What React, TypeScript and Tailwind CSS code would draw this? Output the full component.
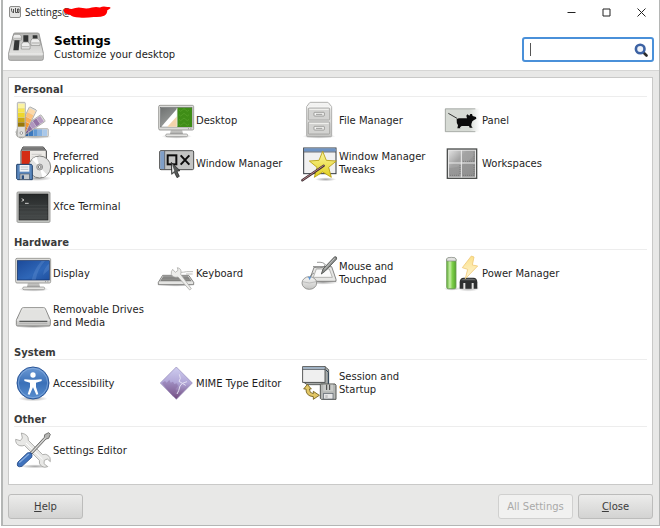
import type { ReactNode } from "react";
import clsx from "clsx";

type SettingsItem = {
  label: string;
  icon: ReactNode;
};

type SettingsGroup = {
  title: string;
  items: SettingsItem[];
};

// Gradients shared by all icons
function IconDefs() {
  return (
    <svg aria-hidden="true" className="absolute h-0 w-0">
      <defs>
        <linearGradient id="metal" x1="0" y1="0" x2="0" y2="1">
          <stop offset="0" stopColor="#f6f6f5" />
          <stop offset="1" stopColor="#c4c4c2" />
        </linearGradient>
        <linearGradient id="metalDark" x1="0" y1="0" x2="0" y2="1">
          <stop offset="0" stopColor="#d8d8d6" />
          <stop offset="1" stopColor="#a6a6a4" />
        </linearGradient>
        <linearGradient id="mixer" x1="0" y1="0" x2="0" y2="1">
          <stop offset="0" stopColor="#b4b4b2" />
          <stop offset="0.7" stopColor="#dededc" />
          <stop offset="1" stopColor="#b9b9b7" />
        </linearGradient>
        <linearGradient id="screenBlue" x1="0" y1="0" x2="1" y2="1">
          <stop offset="0" stopColor="#1c4a99" />
          <stop offset="0.6" stopColor="#2f67b8" />
          <stop offset="1" stopColor="#1f509f" />
        </linearGradient>
        <linearGradient id="wallGray" x1="0" y1="0" x2="1" y2="1">
          <stop offset="0" stopColor="#6f7271" />
          <stop offset="1" stopColor="#b9bbb9" />
        </linearGradient>
        <linearGradient id="panelFade" x1="0" y1="0" x2="1" y2="0">
          <stop offset="0.7" stopColor="#d6dad4" />
          <stop offset="1" stopColor="#ffffff" />
        </linearGradient>
        <linearGradient id="dark" x1="0" y1="0" x2="0" y2="1">
          <stop offset="0" stopColor="#262929" />
          <stop offset="1" stopColor="#474b4b" />
        </linearGradient>
        <linearGradient id="work" x1="0" y1="0" x2="1" y2="1">
          <stop offset="0" stopColor="#e0e0e0" />
          <stop offset="0.35" stopColor="#a4a4a4" />
          <stop offset="1" stopColor="#949494" />
        </linearGradient>
        <linearGradient id="battery" x1="0" y1="0" x2="1" y2="0">
          <stop offset="0" stopColor="#5fae35" />
          <stop offset="0.35" stopColor="#c8f0a6" />
          <stop offset="0.6" stopColor="#7fd04a" />
          <stop offset="1" stopColor="#55a52c" />
        </linearGradient>
        <linearGradient id="bolt" x1="0" y1="0" x2="0" y2="1">
          <stop offset="0" stopColor="#fbe08a" />
          <stop offset="1" stopColor="#fff6d6" />
        </linearGradient>
        <linearGradient id="access" x1="0" y1="0" x2="0" y2="1">
          <stop offset="0" stopColor="#6d9ad4" />
          <stop offset="0.5" stopColor="#3a70b8" />
          <stop offset="1" stopColor="#5a8fcf" />
        </linearGradient>
        <linearGradient id="mime" x1="0" y1="0" x2="0" y2="1">
          <stop offset="0" stopColor="#cfcdf0" />
          <stop offset="0.5" stopColor="#b0a5d6" />
          <stop offset="1" stopColor="#6d4478" />
        </linearGradient>
        <linearGradient id="star" x1="0" y1="0" x2="0" y2="1">
          <stop offset="0" stopColor="#fbf6a0" />
          <stop offset="1" stopColor="#e2cf1c" />
        </linearGradient>
        <radialGradient id="shade">
          <stop offset="0" stopColor="#000000" stopOpacity="0.35" />
          <stop offset="1" stopColor="#000000" stopOpacity="0" />
        </radialGradient>
      </defs>
    </svg>
  );
}

function Icon({ children }: { children: ReactNode }) {
  return (
    <svg viewBox="0 0 108 108" aria-hidden="true" className="h-9 w-9 shrink-0 overflow-visible">
      {children}
    </svg>
  );
}

const SWATCHES = [
  { angle: 90, length: 94, colors: ["#a9c8ea", "#86b1e0", "#5f97d3", "#3c78bd", "#2a5f9f", "#1f4d86"] },
  { angle: 56, length: 92, colors: ["#b79dc4", "#9474a6", "#b096bf", "#8b6a9e", "#6f4a85"] },
  { angle: 26, length: 94, colors: ["#fcd9a8", "#fbc27c", "#f9ae57", "#f6962f", "#e87d0e"] },
  { angle: 0, length: 104, colors: ["#fbf3a0", "#f7e54f", "#edd62c", "#c9a915", "#97770a"] },
];

function AppearanceIcon() {
  return (
    <Icon>
      <ellipse cx="60" cy="104" rx="50" ry="7" fill="url(#shade)" />
      {SWATCHES.map((strip) => (
        <g key={strip.angle} transform={`translate(19 92) rotate(${strip.angle})`}>
          <rect
            x="-12"
            y={13 - strip.length}
            width="24"
            height={strip.length}
            rx="3"
            fill="#dededc"
            stroke="#9a9a96"
            strokeWidth="2"
          />
          {strip.colors.map((color, i) => (
            <rect key={color} x="-10" y={17 - strip.length + i * 14} width="20" height="13" fill={color} />
          ))}
        </g>
      ))}
      <circle cx="19" cy="93" r="4" fill="#fff" stroke="#777" strokeWidth="2" />
    </Icon>
  );
}

function MonitorBody() {
  return (
    <>
      <ellipse cx="56" cy="103" rx="46" ry="7" fill="url(#shade)" />
      <path d="M39 82h33l3 14H36z" fill="url(#metalDark)" />
      <rect x="23" y="96" width="66" height="8" rx="4" fill="#e4e4e2" stroke="#8a8a88" strokeWidth="2" />
      <rect x="2" y="10" width="105" height="74" rx="4" fill="#dcdcda" stroke="#8f8f8c" strokeWidth="2.5" />
      <path d="M90 80h3M97 80h3" stroke="#777" strokeWidth="2" />
    </>
  );
}

function DesktopIcon() {
  return (
    <Icon>
      <MonitorBody />
      <rect x="8" y="17" width="94" height="58" fill="url(#wallGray)" stroke="#55585a" strokeWidth="1.5" />
      <rect x="58" y="17" width="44" height="58" fill="#3f8d17" />
      <path
        d="M63 24q5 8 10 0t10 0t10 0M63 38q5 8 10 0t10 0t10 0M63 52q5 8 10 0t10 0t10 0M63 66q5 8 10 0t10 0t10 0"
        fill="none"
        stroke="#55a02a"
        strokeWidth="2.5"
      />
      <path d="M10 74L57 20v54z" fill="#fff" />
      <path d="M28 74L57 43v31z" fill="#f2d3ab" />
      <path d="M57 18v56" stroke="#e9efe4" strokeWidth="2" />
    </Icon>
  );
}

function CabinetIcon() {
  return (
    <Icon>
      <ellipse cx="54" cy="103" rx="50" ry="7" fill="url(#shade)" />
      <path
        d="M17 14l8-11q1-2 4-2h50q3 0 4 2l9 11v87q0 3-3 3H20q-3 0-3-3z"
        fill="url(#metal)"
        stroke="#a2a2a0"
        strokeWidth="2.5"
      />
      <path d="M18 15h73" stroke="#fff" strokeWidth="2" />
      {[18, 60].map((y) => (
        <g key={y}>
          <rect x="22" y={y} width="64" height="36" rx="3" fill="#d3d3d1" stroke="#959593" strokeWidth="2" />
          <path d={`M25 ${y + 4}h58`} stroke="#f4f4f2" strokeWidth="3" />
          <rect x="39" y={y + 13} width="31" height="11" rx="2" fill="#f3f3f2" stroke="#7c7c79" strokeWidth="2" />
          <path d={`M45 ${y + 19}h19`} stroke="#858583" strokeWidth="2.5" />
        </g>
      ))}
    </Icon>
  );
}

function PanelIcon() {
  return (
    <Icon>
      <rect x="3" y="20" width="104" height="69" fill="url(#panelFade)" />
      <path d="M94 20.500H4V89h90" fill="none" stroke="#9b9f9a" strokeWidth="2.500" />
      <path d="M13 34l26 15" stroke="#111" strokeWidth="2.5" />
      <path
        d="M38 52q3-4 11-3h20l-2-8 3-4 6 4 3-5h5l2 6 10 3 1 5-8 5-4 3-3 8v6l4 5h-9l-2-5H53l-5 4 1 3h-9l2-9q-5-6-4-18z"
        fill="#0b0b0b"
      />
    </Icon>
  );
}

function Floppy({ x, y, gray }: { x: number; y: number; gray?: boolean }) {
  return (
    <g transform={`translate(${x} ${y})`}>
      <path
        d="M2 1h43l3 4v42H4l-3-3V2z"
        fill={gray ? "#b5b7b5" : "#5a87bd"}
        stroke={gray ? "#555753" : "#20406b"}
        strokeWidth="3"
      />
      <rect x="10" y="3" width="29" height="20" fill={gray ? "#c9cbc9" : "#f3f5f7"} />
      <path d={gray ? "M20 3v16M29 3v16" : "M13 9h23M13 16h23"} stroke={gray ? "#3c3c3c" : "#b9bfc6"} strokeWidth="3" />
      <rect x="11" y="30" width="28" height="16" fill={gray ? "#e7e7e7" : "#c3c8cd"} stroke="#58606a" strokeWidth="2" />
      <rect x="16" y="34" width="7" height="11" fill={gray ? "#c5c5c5" : "#2c4f7f"} />
    </g>
  );
}

function PreferredAppsIcon() {
  return (
    <Icon>
      <ellipse cx="66" cy="100" rx="44" ry="8" fill="url(#shade)" />
      <path d="M24 6h61l9 12v68H18V18z" fill="#eceae6" stroke="#3c3c3c" strokeWidth="3" />
      <path d="M24 7h61l8 10H19z" fill="#777" />
      <path d="M20 18h25v66H20z" fill="#d52c14" />
      <path d="M50 28h30M50 36h24" stroke="#cccbc8" strokeWidth="3" />
      <circle cx="74" cy="66" r="33" fill="#e2e2e1" stroke="#6c6c6a" strokeWidth="2.5" />
      <path d="M74 66L51 43a32 32 0 0 1 14-8zM74 66l22 23a32 32 0 0 1-14 8z" fill="#fff" />
      <circle cx="74" cy="66" r="9" fill="#c7c7c6" stroke="#777" strokeWidth="2" />
      <circle cx="74" cy="66" r="4" fill="#fff" stroke="#555" strokeWidth="2" />
      <Floppy x={4} y={57} />
    </Icon>
  );
}

function WindowManagerIcon() {
  return (
    <Icon>
      <rect x="5" y="17" width="102" height="57" rx="4" fill="#c3c4c3" stroke="#4c4e4e" strokeWidth="3" />
      <rect x="7" y="19" width="12" height="53" fill="#7f9fc8" />
      <path d="M20 18v55" stroke="#3c4654" strokeWidth="2" />
      <rect x="29" y="31" width="26" height="27" fill="none" stroke="#0d0d0d" strokeWidth="6" />
      <path d="M68 31l26 28M94 31L68 59" stroke="#0d0d0d" strokeWidth="6" />
      <path
        d="M40 52l1 36 8-6 8 16 7-4-7-15 9-2z"
        fill="#555857"
        stroke="#1c1c1c"
        strokeWidth="2"
        strokeLinejoin="round"
      />
      <path d="M42 58l1 25 6-5z" fill="#f1f1f1" />
    </Icon>
  );
}

function TweaksIcon() {
  return (
    <Icon>
      <ellipse cx="74" cy="103" rx="32" ry="6" fill="url(#shade)" />
      <rect x="8" y="9" width="97" height="77" fill="#f1f1f1" stroke="#33383f" strokeWidth="3" />
      <rect x="9" y="10" width="95" height="10" fill="#6f94c4" />
      <path d="M8 21h97" stroke="#33383f" strokeWidth="2" />
      <path
        d="M65 19l11 27 30 2-23 19 8 30-26-16-25 16 8-30-23-19 29-2z"
        fill="url(#star)"
        stroke="#b39a0c"
        strokeWidth="2.5"
        strokeLinejoin="round"
      />
      <path d="M4 106l64-44" stroke="#3f3034" strokeWidth="7" strokeLinecap="round" />
      <path d="M5 105l62-43" stroke="#b98088" strokeWidth="3" strokeLinecap="round" />
    </Icon>
  );
}

function WorkspacesIcon() {
  return (
    <Icon>
      <rect x="8" y="10" width="92" height="92" fill="#4d4f4e" />
      <rect x="12" y="14" width="84" height="84" fill="#e6e6e6" />
      <rect x="15" y="17" width="78" height="78" fill="url(#work)" />
      <path d="M15 95V70q42 0 78-42v67z" fill="#7b7b7b" opacity="0.25" />
      <path d="M52 15v82M13 54h82" stroke="#ececec" strokeWidth="3" />
      <path
        d="M57 49h34M57 91h34M18 91h30M48 60v30M90 60v30M90 20v28"
        fill="none"
        stroke="#6c6c6c"
        strokeWidth="2"
        strokeDasharray="3 3"
      />
    </Icon>
  );
}

function TerminalIcon() {
  return (
    <Icon>
      <rect x="6" y="12" width="99" height="91" rx="3" fill="#c9cbc8" stroke="#8b8d8a" strokeWidth="2.500" />
      <rect x="12" y="18" width="87" height="78" fill="url(#dark)" stroke="#1b1d1d" strokeWidth="2" />
      <path d="M13 52h85M13 62h85M13 72h85M13 82h85" stroke="#4c5050" strokeWidth="1.5" />
      <path d="M20 32l7 4-7 4M30 46h11" fill="none" stroke="#eeeeec" strokeWidth="2.5" />
    </Icon>
  );
}

function DisplayIcon() {
  return (
    <Icon>
      <MonitorBody />
      <rect x="7" y="17" width="96" height="58" fill="url(#screenBlue)" stroke="#102c60" strokeWidth="2" />
      <path d="M50 74q8-34 30-56h10q-22 24-28 56zM84 60q2-20 18-34v18z" fill="#7aa3dc" opacity="0.25" />
    </Icon>
  );
}

function KeyboardIcon() {
  return (
    <Icon>
      <ellipse cx="54" cy="90" rx="54" ry="5" fill="url(#shade)" />
      <path d="M14 61h78l15 21v7H1v-7z" fill="#e4e4e2" stroke="#6d6d6b" strokeWidth="2.5" />
      <path d="M16 64h74l11 15H6z" fill="#7e7e7c" />
      <path d="M14 69h78M10 74h86" stroke="#a4a4a1" strokeWidth="1.5" />
      <path d="M66 52q12 0 20-2h19M84 57h20" stroke="#bdbdba" strokeWidth="3" fill="none" />
      <path
        d="M44 43l8 9 8-6-2-8q12 2 11 14l-1 6 32 43-5 4-35-39q-14 3-20-7-2-10 4-16z"
        fill="#ededeb"
        stroke="#a0a09d"
        strokeWidth="2"
      />
    </Icon>
  );
}

function MouseIcon() {
  return (
    <Icon>
      <ellipse cx="66" cy="82" rx="46" ry="7" fill="url(#shade)" />
      <path d="M40 35h52l13 38v6H24l2-6z" fill="#e6e6e4" stroke="#6f6f6d" strokeWidth="2.5" />
      <path d="M46 42h39l9 25H37z" fill="#fafafa" stroke="#969693" strokeWidth="2" />
      <path
        d="M27 68q2-10 12-14M36 33q4 8 30 4 10-2 4-8M48 22q20-2 26 8"
        fill="none"
        stroke="#666866"
        strokeWidth="2"
      />
      <path
        d="M61 57l5-15 35-37 5 1 1 6-34 36z"
        fill="#8b8d8b"
        stroke="#4d4f4d"
        strokeWidth="2.500"
        strokeLinejoin="round"
      />
      <path d="M70 43l31-33" stroke="#d0d2d0" strokeWidth="2.5" />
      <ellipse cx="25" cy="84" rx="22" ry="19" fill="url(#metal)" stroke="#888885" strokeWidth="2.5" />
      <path d="M4 80q21 8 42 0" fill="none" stroke="#aaa" strokeWidth="2" />
      <path d="M20 64q5 4 11 0l-5 12z" fill="#5a93d3" />
    </Icon>
  );
}

function PowerIcon() {
  return (
    <Icon>
      <ellipse cx="24" cy="101" rx="24" ry="6" fill="url(#shade)" />
      <rect x="8" y="9" width="28" height="92" rx="5" fill="url(#battery)" stroke="#6e9a55" strokeWidth="2.5" />
      <path d="M8 18v-6q0-5 14-5t14 5v6z" fill="#e2e2e0" stroke="#888" strokeWidth="2" />
      <ellipse cx="73" cy="100" rx="34" ry="10" fill="url(#shade)" />
      <path d="M47 82q0-14 12-14h29q12 0 12 14v19H47z" fill="#2e3030" />
      <path d="M51 76q4-5 11-5h24q8 0 10 5z" fill="#696b6b" />
      <path d="M58 84h6v18h-6zM83 84h6v18h-6z" fill="#e2e2e0" />
      <path
        d="M82 3L55 38l16 5-7 28 37-38-16-3 5-24z"
        fill="url(#bolt)"
        stroke="#efc977"
        strokeWidth="2.500"
        strokeLinejoin="round"
      />
    </Icon>
  );
}

function DriveIcon() {
  return (
    <Icon>
      <ellipse cx="55" cy="85" rx="54" ry="6" fill="url(#shade)" />
      <path
        d="M20 32q1-3 5-3h61q4 0 5 3l15 34v14q0 4-4 4H8q-4 0-4-4V66z"
        fill="url(#metal)"
        stroke="#777775"
        strokeWidth="2.500"
      />
      <path d="M23 34h65l12 29H10z" fill="#e2e2e0" />
      <path d="M5 66h100" stroke="#fff" strokeWidth="2" />
      <path d="M13 70h84" stroke="#4f5150" strokeWidth="3.5" />
      <path d="M13 76h84" stroke="#a5a5a3" strokeWidth="2" />
    </Icon>
  );
}

function AccessibilityIcon() {
  return (
    <Icon>
      <ellipse cx="54" cy="101" rx="44" ry="8" fill="url(#shade)" />
      <circle cx="54" cy="54" r="48" fill="url(#access)" stroke="#2a5597" strokeWidth="3" />
      <circle cx="54" cy="54" r="44" fill="none" stroke="#8fb4e2" strokeWidth="2" />
      <circle cx="54" cy="30" r="8" fill="#fff" />
      <path d="M28 43l19 1h14l19-1v5l-17 5v13l7 22-6 1-10-22-10 22-6-1 7-22V53l-17-5z" fill="#fff" />
    </Icon>
  );
}

function MimeIcon() {
  return (
    <Icon>
      <path d="M55 6l48 48-48 49L7 54z" fill="url(#mime)" stroke="#9186b5" strokeWidth="2" strokeLinejoin="round" />
      <path
        d="M12 54l9-6 5 5 8-8 4 8 7-3 4 7 8-2 3 9-8 8 4 7-8 4 2 9-5 3z"
        fill="#7d5c93"
        opacity="0.4"
      />
      <path
        d="M64 28l3 12-4 9 10 6-7 8-4 14-5 10M73 55l14-5M73 55l10 6"
        fill="none"
        stroke="#e4dff2"
        strokeWidth="3"
      />
    </Icon>
  );
}

function SessionIcon() {
  return (
    <Icon>
      <path d="M6 50l12 9h65V14L72 5z" fill="#a7aaa8" stroke="#4b4e4d" strokeWidth="2.5" />
      <path d="M74 14l8 8v36" fill="none" stroke="#2e4358" strokeWidth="3" />
      <rect x="5" y="5" width="67" height="47" fill="#efefef" stroke="#3b3d3d" strokeWidth="2.500" />
      <rect x="6" y="6" width="65" height="5" fill="#9db2c6" />
      <path d="M5 13h67" stroke="#3b4650" strokeWidth="2.5" />
      <Floppy x={57} y={56} gray />
      <path
        d="M19 58L8 72h7q-1 21 22 23v8l18-12-18-12v7q-12-1-12-14h6z"
        fill="#e3c766"
        stroke="#6f5a17"
        strokeWidth="2.5"
        strokeLinejoin="round"
      />
    </Icon>
  );
}

function SettingsEditorIcon() {
  return (
    <Icon>
      <ellipse cx="60" cy="103" rx="46" ry="6" fill="url(#shade)" />
      <path
        d="M19 3l3 15-6 8-14-4q-1 15 12 19 8 2 14-1l45 45q-2 12 7 18 9 5 18 1l-11-9 1-10 9-4 9 8q2-14-8-20-7-4-15-1L40 25q2-17-21-22z"
        fill="#e8e8e6"
        stroke="#90908d"
        strokeWidth="2"
        strokeLinejoin="round"
      />
      <path d="M33 33l50 49" stroke="#fff" strokeWidth="3" />
      <path d="M46 61L88 16l1-8 12-6 5 5-5 12-8 2-42 45z" fill="#b5b5b3" stroke="#5f5f5d" strokeWidth="2.5" />
      <path d="M50 62L92 17" stroke="#f2f2f1" strokeWidth="2" />
      <path
        d="M9 90l28-27q8-3 12 1 4 5 1 12l-29 27q-9 3-13-1-3-6 1-12z"
        fill="#3f73bd"
        stroke="#1f4684"
        strokeWidth="2.5"
      />
      <path d="M14 91l27-24" stroke="#86acdf" strokeWidth="4" strokeLinecap="round" />
    </Icon>
  );
}

function MixerIcon({ className }: { className: string }) {
  return (
    <svg viewBox="0 0 108 88" aria-hidden="true" className={clsx("shrink-0", className)}>
      <path
        d="M17 4q1-2 4-2h68q3 0 4 2l13 58v17q0 5-5 5H7q-5 0-5-5V62z"
        fill="url(#mixer)"
        stroke="#8c8c8a"
        strokeWidth="2.5"
      />
      <path d="M3 65h103" stroke="#f4f4f3" strokeWidth="3" />
      <path d="M4 71h101v8H4z" fill="#b9b9b7" />
      <path d="M20 20h15l-3 34H16zM46 9h15v30H46zM74 9h14l2 28H75z" fill="#333535" />
      <path
        d="M15 12l4-6h17l4 6v11H15zM40 36l5-7h16l5 8v13H40zM68 26l4-7h18l6 7v13H69z"
        fill="#ededec"
        stroke="#858583"
        strokeWidth="2"
      />
      <path d="M17 18h22M42 43h22M71 32h23" stroke="#bdbdbb" strokeWidth="4" />
    </svg>
  );
}

const GROUPS: SettingsGroup[] = [
  {
    title: "Personal",
    items: [
      { label: "Appearance", icon: <AppearanceIcon /> },
      { label: "Desktop", icon: <DesktopIcon /> },
      { label: "File Manager", icon: <CabinetIcon /> },
      { label: "Panel", icon: <PanelIcon /> },
      { label: "Preferred Applications", icon: <PreferredAppsIcon /> },
      { label: "Window Manager", icon: <WindowManagerIcon /> },
      { label: "Window Manager Tweaks", icon: <TweaksIcon /> },
      { label: "Workspaces", icon: <WorkspacesIcon /> },
      { label: "Xfce Terminal", icon: <TerminalIcon /> },
    ],
  },
  {
    title: "Hardware",
    items: [
      { label: "Display", icon: <DisplayIcon /> },
      { label: "Keyboard", icon: <KeyboardIcon /> },
      { label: "Mouse and Touchpad", icon: <MouseIcon /> },
      { label: "Power Manager", icon: <PowerIcon /> },
      { label: "Removable Drives and Media", icon: <DriveIcon /> },
    ],
  },
  {
    title: "System",
    items: [
      { label: "Accessibility", icon: <AccessibilityIcon /> },
      { label: "MIME Type Editor", icon: <MimeIcon /> },
      { label: "Session and Startup", icon: <SessionIcon /> },
    ],
  },
  {
    title: "Other",
    items: [{ label: "Settings Editor", icon: <SettingsEditorIcon /> }],
  },
];

function TitleBar() {
  return (
    <div className="flex h-6 items-center justify-between pr-2.5 pl-1.5">
      <div className="flex items-center gap-1">
        <svg viewBox="0 0 12 12" aria-hidden="true" className="h-3 w-3">
          <rect x="0.500" y="0.500" width="11" height="11" rx="1.500" fill="#e4e4e3" stroke="#8d8d8b" />
          <path
            d="M2.500 2.500v2l1 2M4.500 3v4M6.500 2v4.500h1.500M8.500 3h1.500v3.500H8.500z"
            fill="none"
            stroke="#3d3d3d"
            strokeWidth="0.900"
          />
        </svg>
        <span className="flex items-center font-['Open_Sans',sans-serif] text-[10px] leading-3 text-[#222]">
          Settings@
          <svg viewBox="0 0 156 36" aria-hidden="true" className="-ml-2 h-3 w-12">
            <path
              d="M2 14q0-7 10-8 10 2 16 2 20-8 36-3 14 4 30-2 14-3 26 0 12-6 24-1 12-2 10 4-4 4-10 6 0 12-10 18-14 6-34 4-26 4-46 2-24 0-30-8-8-2-14-4-6-4-8-10z"
              fill="#ff0000"
            />
          </svg>
        </span>
      </div>
      <div className="flex items-center gap-[19px] text-[#222]">
        <button type="button" aria-label="Minimize" className="flex h-4 w-4 items-center justify-center">
          <svg viewBox="0 0 9 9" className="h-[9px] w-[9px]">
            <path d="M0.500 4.500h8" stroke="currentColor" />
          </svg>
        </button>
        <button type="button" aria-label="Maximize" className="flex h-4 w-4 items-center justify-center">
          <svg viewBox="0 0 9 9" className="h-[9px] w-[9px]">
            <path d="M1 1h7v7H1z" fill="none" stroke="currentColor" />
          </svg>
        </button>
        <button type="button" aria-label="Close window" className="flex h-4 w-4 items-center justify-center">
          <svg viewBox="0 0 9 9" className="h-[9px] w-[9px]">
            <path d="M0.500 0.500l8 8M8.500 0.500l-8 8" stroke="currentColor" />
          </svg>
        </button>
      </div>
    </div>
  );
}

function Header() {
  return (
    <header className="flex h-[47px] items-center justify-between border-b border-[#d6d6d5] pr-[5px] pl-[5px]">
      <div className="flex items-center gap-2.5">
        <MixerIcon className="h-[30px] w-9" />
        <div>
          <h1 className="text-xs leading-[14px] font-bold text-black">Settings</h1>
          <p className="text-[10px] leading-[13px] text-[#1c1c1c]">Customize your desktop</p>
        </div>
      </div>
      <div className="relative mt-1">
        <input
          type="search"
          aria-label="Search settings"
          className="block h-[25px] w-[132px] rounded-[3px] border-2 border-[#4a90d9] bg-white pr-6 pl-1.5 text-[10px] outline-none"
        />
        <span className="pointer-events-none absolute top-1.5 left-2 h-[13px] w-px bg-[#555]" />
        <svg
          viewBox="0 0 14 14"
          aria-hidden="true"
          className="pointer-events-none absolute top-1.5 right-1.5 h-3.5 w-3.5"
        >
          <path d="M9.500 9.500l3 3" stroke="#2b2b2b" strokeWidth="2.600" strokeLinecap="round" />
          <circle cx="6.200" cy="6" r="4.300" fill="#eef2f8" stroke="#3c62a3" strokeWidth="2.600" />
        </svg>
      </div>
    </header>
  );
}

function SettingsSection({ group }: { group: SettingsGroup }) {
  return (
    <section className="pb-3">
      <h2 className="border-b border-[#ededed] text-[10px] leading-[13px] font-bold text-[#3a3a3a]">{group.title}</h2>
      <div className="grid grid-cols-[repeat(auto-fill,143px)] gap-y-[7px] pt-[5px] pl-px">
        {group.items.map((item) => (
          <button key={item.label} type="button" className="flex h-9 items-center gap-0.5 text-left">
            {item.icon}
            <span className="max-w-24 text-[10px] leading-[13px] text-[#1e1e1e]">{item.label}</span>
          </button>
        ))}
      </div>
    </section>
  );
}

function FooterButton({ children, disabled }: { children: ReactNode; disabled?: boolean }) {
  return (
    <button
      type="button"
      disabled={disabled}
      className={clsx(
        "h-[25px] w-[75px] rounded-[3px] border text-[10px] leading-[13px]",
        disabled
          ? "border-[#d0d0cf] bg-[#f1f1f0] text-[#a9a9a8]"
          : "border-[#bcbcbb] bg-linear-to-b from-[#ececeb] to-[#d3d3d2] text-[#3c3c3c]",
      )}
    >
      {children}
    </button>
  );
}

export default function App() {
  return (
    <div className="flex min-h-screen flex-col bg-white pb-0.5 pl-px font-['DejaVu_Sans',sans-serif]">
      <IconDefs />
      <div className="flex flex-1 flex-col border-r border-b border-l-2 border-[#b4b6b5] bg-white">
        <TitleBar />
        <Header />
        <div className="flex flex-1 flex-col bg-[#e8e8e7] pt-1.5 pr-1.5 pb-1.5 pl-[5px]">
          <main className="flex-1 border border-[#c9c9c8] bg-white px-[5px] pt-[5px]">
            {GROUPS.map((group) => (
              <SettingsSection key={group.title} group={group} />
            ))}
          </main>
          <footer className="flex items-center justify-between pt-[9px]">
            <FooterButton>
              <u>H</u>elp
            </FooterButton>
            <div className="flex gap-[5px]">
              <FooterButton disabled>All Settings</FooterButton>
              <FooterButton>
                <u>C</u>lose
              </FooterButton>
            </div>
          </footer>
        </div>
      </div>
    </div>
  );
}
